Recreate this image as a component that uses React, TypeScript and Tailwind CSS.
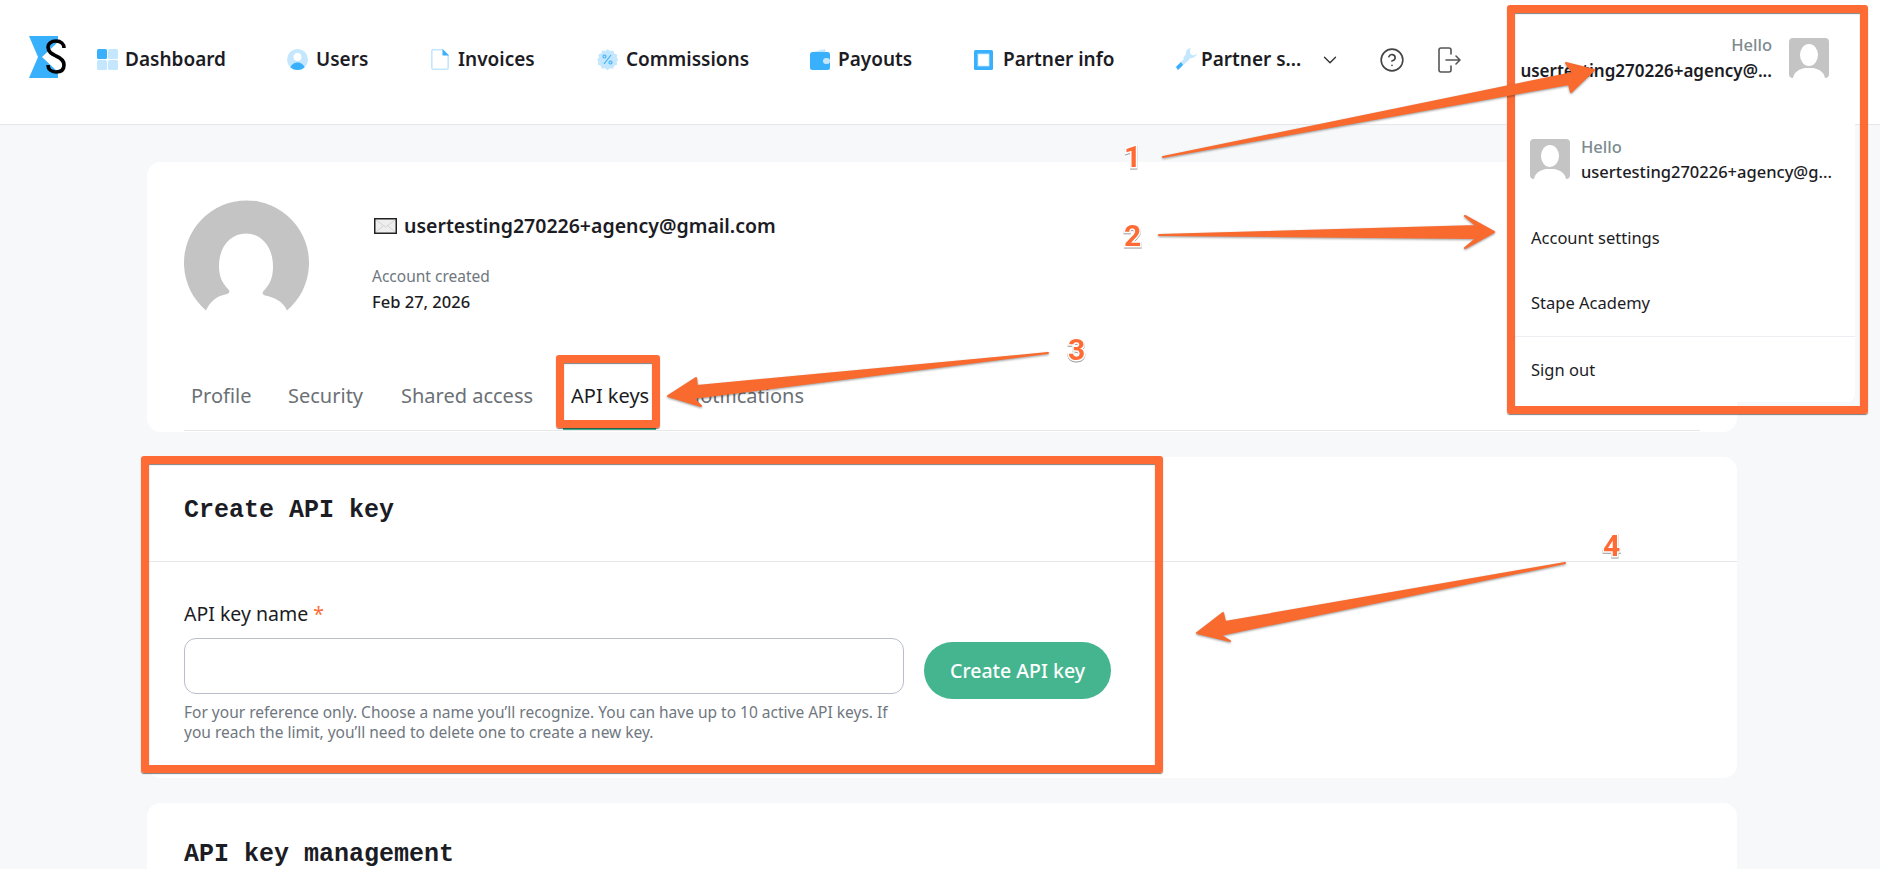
import React from 'react';
import { ChevronDown, CircleHelp } from 'lucide-react';

function Logo() {
  return (
    <svg width="38" height="42" viewBox="0 0 38 42" className="shrink-0 -mt-[6px]">
      <path d="M0 0h29v6L13 21l16 15v6H0l9-21L0 0z" fill="#38b0fb" />
      <path d="M35 12c0-4-3-7-8-7s-8 3-8 6c0 5 4 7 8 9 5 2 8 4 8 9s-3 7-8 7-8-3-8-7" fill="none" stroke="#000" strokeWidth="3.600" />
    </svg>
  );
}

function DashIcon() {
  return (
    <svg width="21" height="21" viewBox="0 0 21 21" className="shrink-0">
      <rect width="10" height="10" rx="1.500" fill="#38b0fb" />
      <rect x="11" width="10" height="10" rx="1.500" fill="#c4e7fe" />
      <rect y="11" width="10" height="10" rx="1.500" fill="#c4e7fe" />
      <rect x="11" y="11" width="10" height="10" rx="1.500" fill="#c4e7fe" />
    </svg>
  );
}

function UserIcon() {
  return (
    <svg width="21" height="21" viewBox="0 0 21 21" className="shrink-0">
      <circle cx="10.500" cy="10.500" r="10.500" fill="#c4e7fe" />
      <circle cx="10.500" cy="8" r="4" fill="#fff" />
      <path d="M3.500 18.500c1-3.500 4-5 7-5s6 1.500 7 5c-2 1.700-4.500 2.500-7 2.500s-5-.8-7-2.500z" fill="#38b0fb" />
    </svg>
  );
}

function InvoiceIcon() {
  return (
    <svg width="18" height="21" viewBox="0 0 18 21" className="shrink-0">
      <path d="M1.500.8h10l5.700 5.700v12.200a1.500 1.500 0 0 1-1.500 1.500H2a1.500 1.500 0 0 1-1.200-1.500V2z" fill="#fff" stroke="#c4e7fe" strokeWidth="1.600" />
      <path d="M11.500 0l6.500 6.500h-6.500z" fill="#38b0fb" />
    </svg>
  );
}

function CommissionIcon() {
  return (
    <svg width="21" height="21" viewBox="0 0 21 21" className="shrink-0">
      <path d="M10.500 0l2.500 2 3.200-.6 1 3 3 1.200-.5 3.200 1.800 1.700-1.800 2 .5 3.200-3 1.100-1 3-3.200-.5-2.500 2-2.500-2-3.200.5-1-3-3-1.100.5-3.200L0 10.500l1.800-1.700-.5-3.200 3-1.200 1-3 3.200.6z" fill="#c4e7fe" />
      <path d="M7 15L14 6" stroke="#38b0fb" strokeWidth="1.100" />
      <circle cx="7.500" cy="7.500" r="1.500" fill="none" stroke="#38b0fb" strokeWidth="1.100" />
      <circle cx="13.500" cy="13.500" r="1.500" fill="none" stroke="#38b0fb" strokeWidth="1.100" />
    </svg>
  );
}

function WalletIcon() {
  return (
    <svg width="20" height="21" viewBox="0 0 20 21" className="shrink-0">
      <path d="M3 3L15 0l1 4z" fill="#c4e7fe" />
      <rect y="3" width="20" height="18" rx="2.500" fill="#38b0fb" />
      <rect x="13" y="9" width="7" height="6" rx="3" fill="#c4e7fe" />
    </svg>
  );
}

function PartnerIcon() {
  return (
    <svg width="19" height="20" viewBox="0 0 19 20" className="shrink-0">
      <rect width="19" height="20" rx="1.500" fill="#38b0fb" />
      <rect x="4" y="4" width="11" height="12" fill="#fff" stroke="#c4e7fe" strokeWidth="0.800" />
    </svg>
  );
}

function WrenchIcon() {
  return (
    <svg width="22" height="23" viewBox="0 0 22 23" className="shrink-0">
      <path d="M15.500 0c-3 .6-5 3-4.500 6L8 10l4 4 3.500-4c3 .6 5.500-1.500 6.500-4.500l-3.500 2-3-1.500-.5-3z" fill="#c4e7fe" />
      <path d="M9.500 10.500L1 19l2 3 9-8.500z" fill="#c4e7fe" />
      <path d="M6 14L1 19l2 3 5-5z" fill="#38b0fb" />
    </svg>
  );
}

function Logout() {
  return (
    <svg width="23" height="26" viewBox="0 0 23 26" fill="none" stroke="#555" strokeWidth="1.600" strokeLinecap="round" strokeLinejoin="round">
      <path d="M13 7V3a2 2 0 0 0-2-2H3a2 2 0 0 0-2 2v20a2 2 0 0 0 2 2h8a2 2 0 0 0 2-2v-4" />
      <path d="M8 13h14M18 9l4 4-4 4" />
    </svg>
  );
}

function Avatar() {
  return (
    <svg width="40" height="40" viewBox="0 0 40 40" className="shrink-0 rounded">
      <rect width="40" height="40" fill="#c4c4c4" />
      <ellipse cx="20" cy="17" rx="9" ry="11" fill="#fff" />
      <path d="M4 40c1-6 6-9 12-10h8c6 1 11 4 12 10z" fill="#fff" />
    </svg>
  );
}

function BigAvatar() {
  return (
    <svg width="125" height="111" viewBox="0 0 125 111" className="shrink-0">
      <path d="M22 110.500a62.500 62.500 0 1 1 81 0c-4-9-12-13-22-15-3-1-3-3-1-5 7-7 9-15 9-24 0-20-12-33-27-33S35 46 35 66c0 8 2 16 9 23 2 2 2 4-1 5-10 2-17 7-21 16.500z" fill="#c4c4c4" />
    </svg>
  );
}

function Envelope() {
  return (
    <svg width="23" height="16" viewBox="0 0 23 16" className="shrink-0">
      <rect x="0.750" y="0.750" width="21.500" height="14.500" fill="#eee" stroke="#222" strokeWidth="1.500" />
      <path d="M2 2l9.500 7L21 2M2 14l7-6M21 14l-7-6" fill="none" stroke="#ccc" strokeWidth="0.800" />
    </svg>
  );
}

function Nav({ icon, label, className }: { icon: React.ReactNode; label: string; className: string }) {
  return (
    <div className={`flex items-center shrink-0 ${className}`}>
      {icon}
      <span className="text-[19px] leading-[24px] font-semibold text-[#1c1c24] whitespace-nowrap -mt-[2px]">{label}</span>
    </div>
  );
}

function Num({ value, className }: { value: string; className: string }) {
  return (
    <span className={`absolute z-30 text-[30px] leading-[34px] font-bold text-[#ff6b35] font-['Roboto',sans-serif] [paint-order:stroke_fill] [-webkit-text-stroke:3px_#fff] drop-shadow-[0_1px_0_#999] ${className}`}>{value}</span>
  );
}

function Annotations() {
  const frame = 'absolute border-8 border-[#ff6b35] rounded-[3px] z-20 shadow-[0_1px_1px_rgba(0,0,0,0.5),inset_0_1px_1px_rgba(0,0,0,0.5)]';
  return (
    <>
      <div className={`${frame} left-[1507px] top-[5px] w-[361px] h-[409px]`} />
      <div className={`${frame} left-[556px] top-[355px] w-[104px] h-[73px]`} />
      <div className={`${frame} left-[141px] top-[456px] w-[1022px] h-[317px]`} />
      <svg className="absolute left-0 top-0 z-30 pointer-events-none drop-shadow-[0_1px_1px_rgba(0,0,0,0.4)]" width="1880" height="869">
        <g fill="#f96a2f" stroke="#f96a2f" strokeWidth="2" strokeLinejoin="round">
          <path d="M1163 157L1573 73 1566 63 1594 70 1571 92 1569 84z" />
          <path d="M1159 235L1477 226 1465 216 1494 232 1465 248 1477 238z" />
          <path d="M1048 353L697 386 696 378 668 396 701 406 693 398z" />
          <path d="M1565 563L1225 622 1223 613 1197 633 1230 641 1220 635z" />
        </g>
      </svg>
      <Num value="1" className="left-[1124px] top-[140px]" />
      <Num value="2" className="left-[1124px] top-[219px]" />
      <Num value="3" className="left-[1068px] top-[333px]" />
      <Num value="4" className="left-[1603px] top-[529px]" />
    </>
  );
}

export default function App() {
  return (
    <div className="relative h-[869px] overflow-hidden bg-[#f7f8fa] font-['Noto_Sans',sans-serif] text-[#1c1c24]">
      <header className="relative h-[125px] bg-white border-b border-[#e5e7eb] flex items-center pl-[29px] pb-[5px]">
        <Logo />
        <Nav className="ml-[30px] w-[190px] gap-[7px]" icon={<DashIcon />} label="Dashboard" />
        <Nav className="w-[144px] gap-[8px]" icon={<UserIcon />} label="Users" />
        <Nav className="w-[166px] gap-[9px]" icon={<InvoiceIcon />} label="Invoices" />
        <Nav className="w-[213px] gap-[8px]" icon={<CommissionIcon />} label="Commissions" />
        <Nav className="w-[164px] gap-[8px]" icon={<WalletIcon />} label="Payouts" />
        <Nav className="w-[201px] gap-[10px]" icon={<PartnerIcon />} label="Partner info" />
        <Nav className="w-[144px] gap-[4px]" icon={<WrenchIcon />} label="Partner s..." />
        <ChevronDown className="text-[#333]" size={22} strokeWidth={1.5} />
        <CircleHelp className="ml-[38px] text-[#444]" size={26} strokeWidth={1.5} />
        <div className="ml-[33px]"><Logout /></div>
        <div className="absolute left-[1523px] top-[38px] w-[306px] flex justify-between">
          <div className="w-[249px] flex flex-col items-end">
            <span className="text-[16.500px] leading-[20px] font-medium text-[#7d8a8f] -mt-[3px]">Hello</span>
            <span className="mt-[6px] text-[17px] leading-[20px] font-semibold whitespace-nowrap">usertesting270226+agency@...</span>
          </div>
          <Avatar />
        </div>
      </header>

      <main className="pl-[147px] pt-[37px] w-[1737px] flex flex-col gap-[25px]">
        <section className="h-[270px] w-[1590px] bg-white rounded-[14px] px-[37px] flex flex-col">
          <div className="flex pt-[38px] h-[186px]">
            <BigAvatar />
            <div className="ml-[63px]">
              <div className="flex items-center gap-[7px] mt-[6px] h-[40px] ml-[2px]">
                <Envelope />
                <span className="text-[19.500px] font-semibold whitespace-nowrap">usertesting270226+agency@gmail.com</span>
              </div>
              <p className="mt-[20px] text-[15.500px] leading-[20px] text-[#6f7780]">Account created</p>
              <p className="mt-[6px] text-[16.500px] leading-[20px] font-medium">Feb 27, 2026</p>
            </div>
          </div>
          <nav className="flex h-[83px] items-end border-b border-[#e5e7eb] text-[20px] leading-[26px] text-[#6b7075]">
            <span className="w-[96px] pl-[7px] pb-[21px]">Profile</span>
            <span className="w-[113px] pl-[8px] pb-[21px]">Security</span>
            <span className="w-[170px] pl-[8px] pb-[21px] whitespace-nowrap">Shared access</span>
            <span className="w-[93px] pl-[8px] pb-[18px] border-b-[3px] border-[#45b58f] text-[#1c1c24] whitespace-nowrap">API keys</span>
            <span className="ml-[29px] pb-[21px]">Notifications</span>
          </nav>
        </section>

        <section className="h-[321px] w-[1590px] bg-white rounded-[14px]">
          <div className="h-[105px] border-b border-[#e5e7eb] pl-[37px] flex items-center">
            <h2 className="font-['Liberation_Mono',monospace] font-bold text-[25px] mt-[4px]">Create API key</h2>
          </div>
          <div className="pl-[37px] pt-[40px]">
            <label className="block text-[19.500px] leading-[24px]">API key name <span className="text-[#ff6b35]">*</span></label>
            <div className="mt-[12px] flex">
              <div className="w-[720px]">
                <input className="block w-full h-[56px] rounded-xl border border-[#b8bfc9] bg-white" />
                <p className="mt-[8px] text-[15.500px] leading-[20px] text-[#6f7780]">For your reference only. Choose a name you’ll recognize. You can have up to 10 active API keys. If you reach the limit, you’ll need to delete one to create a new key.</p>
              </div>
              <button className="ml-[20px] mt-[4px] h-[57px] w-[187px] rounded-full bg-[#45b58f] text-white text-[19.500px] font-medium">Create API key</button>
            </div>
          </div>
        </section>

        <section className="h-[300px] w-[1590px] bg-white rounded-[14px] pl-[37px] pt-[39px]">
          <h2 className="font-['Liberation_Mono',monospace] font-bold text-[25px] leading-[25px]">API key management</h2>
        </section>
      </main>

      <aside className="absolute left-[1515px] top-[124px] w-[340px] h-[278px] z-10 bg-white rounded-b-[8px]">
        <div className="flex pl-[15px] pt-[15px] gap-[11px]">
          <Avatar />
          <div className="min-w-0 -mt-[2px]">
            <p className="text-[16.500px] leading-[20px] font-medium text-[#7d8a8f]">Hello</p>
            <p className="mt-[5px] text-[16.500px] leading-[20px] font-medium whitespace-nowrap">usertesting270226+agency@g...</p>
          </div>
        </div>
        <div className="pl-[16px] text-[16.500px] leading-[22px]">
          <p className="mt-[45px]">Account settings</p>
          <p className="mt-[43px]">Stape Academy</p>
        </div>
        <div className="mt-[22px] border-t border-[#eceef1]" />
        <p className="pl-[16px] mt-[22px] text-[16.500px] leading-[22px]">Sign out</p>
      </aside>

      <Annotations />
    </div>
  );
}
